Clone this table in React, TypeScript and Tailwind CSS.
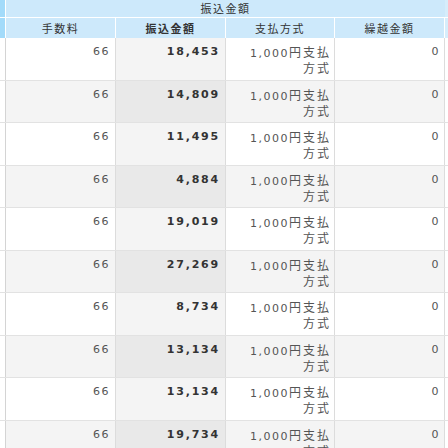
import React from "react";

const rows = ["18,453", "14,809", "11,495", "4,884", "19,019", "27,269", "8,734", "13,134", "13,134", "19,734"];

const cjk = "font-['Noto_Sans_CJK_JP'] text-[12px] tracking-[2px]";

function Row({ v, odd }: { v: string; odd: boolean }) {
  const rowCls = odd
    ? "flex h-[43px] border-b border-[#e2e2e2] text-[11px] text-[#555] leading-[14px]"
    : "flex h-[42px] border-b border-[#e2e2e2] text-[11px] text-[#555] leading-[14px]";
  const cell = odd
    ? "shrink-0 bg-white border-r border-[#dcdcdc] text-right pt-[7px] tracking-[1.5px]"
    : "shrink-0 bg-[#f4f4f4] border-r border-[#dcdcdc] text-right pt-[7px] tracking-[1.5px]";
  const cell2 = odd
    ? "w-[110px] shrink-0 bg-[#f4f4f4] border-r border-[#dcdcdc] text-right pr-[5px] pt-[7px] font-bold text-[#333] tracking-[1.8px]"
    : "w-[110px] shrink-0 bg-[#e9e9e9] border-r border-[#dcdcdc] text-right pr-[5px] pt-[7px] font-bold text-[#333] tracking-[1.8px]";
  return (
    <div className={rowCls}>
      <div className="w-[6px] shrink-0 bg-white border-r border-[#d4d4d4]" />
      <div className={cell + " w-[110px] pr-[5px]"}>66</div>
      <div className={cell2}>{v}</div>
      <div className={cell + " w-[109px] pr-[3px]"}>
        1,000<span className={cjk}>円支払</span>
        <br />
        <span className={cjk}>方式</span>
      </div>
      <div className={cell + " w-[110px] pr-[4px]"}>0</div>
      <div className="flex-1 bg-white" />
    </div>
  );
}

export default function App() {
  return (
    <div className="w-[448px] h-[448px] overflow-hidden bg-white" style={{ fontFamily: '"DejaVu Sans", "Noto Sans CJK JP", sans-serif' }}>
      <div className="flex h-[18px] border-b border-white">
        <div className="w-[6px] shrink-0 bg-[#a3dbfa] border-r border-white" />
        <div className="w-[439px] shrink-0 bg-[#cde9fb] flex items-center justify-center text-[11px] text-[#333] tracking-[1.5px] font-['Noto_Sans_CJK_JP']">
          振込金額
        </div>
        <div className="flex-1 bg-[#d6edfb]" />
      </div>
      <div className="flex h-[20px] text-[11px] text-[#333] tracking-[1.5px] font-['Noto_Sans_CJK_JP']">
        <div className="w-[6px] shrink-0 bg-[#a3dbfa] border-r border-white" />
        <div className="w-[110px] shrink-0 bg-[#cde9fb] border-r border-white flex items-center justify-center">手数料</div>
        <div className="w-[110px] shrink-0 bg-[#cde9fb] border-r border-white flex items-center justify-center font-bold">振込金額</div>
        <div className="w-[109px] shrink-0 bg-[#cde9fb] border-r border-white flex items-center justify-center">支払方式</div>
        <div className="w-[110px] shrink-0 bg-[#cde9fb] border-r border-white flex items-center justify-center">繰越金額</div>
        <div className="flex-1 bg-[#d6edfb]" />
      </div>
      {rows.map((v, i) => (
        <Row key={i} v={v} odd={i % 2 === 0} />
      ))}
    </div>
  );
}
